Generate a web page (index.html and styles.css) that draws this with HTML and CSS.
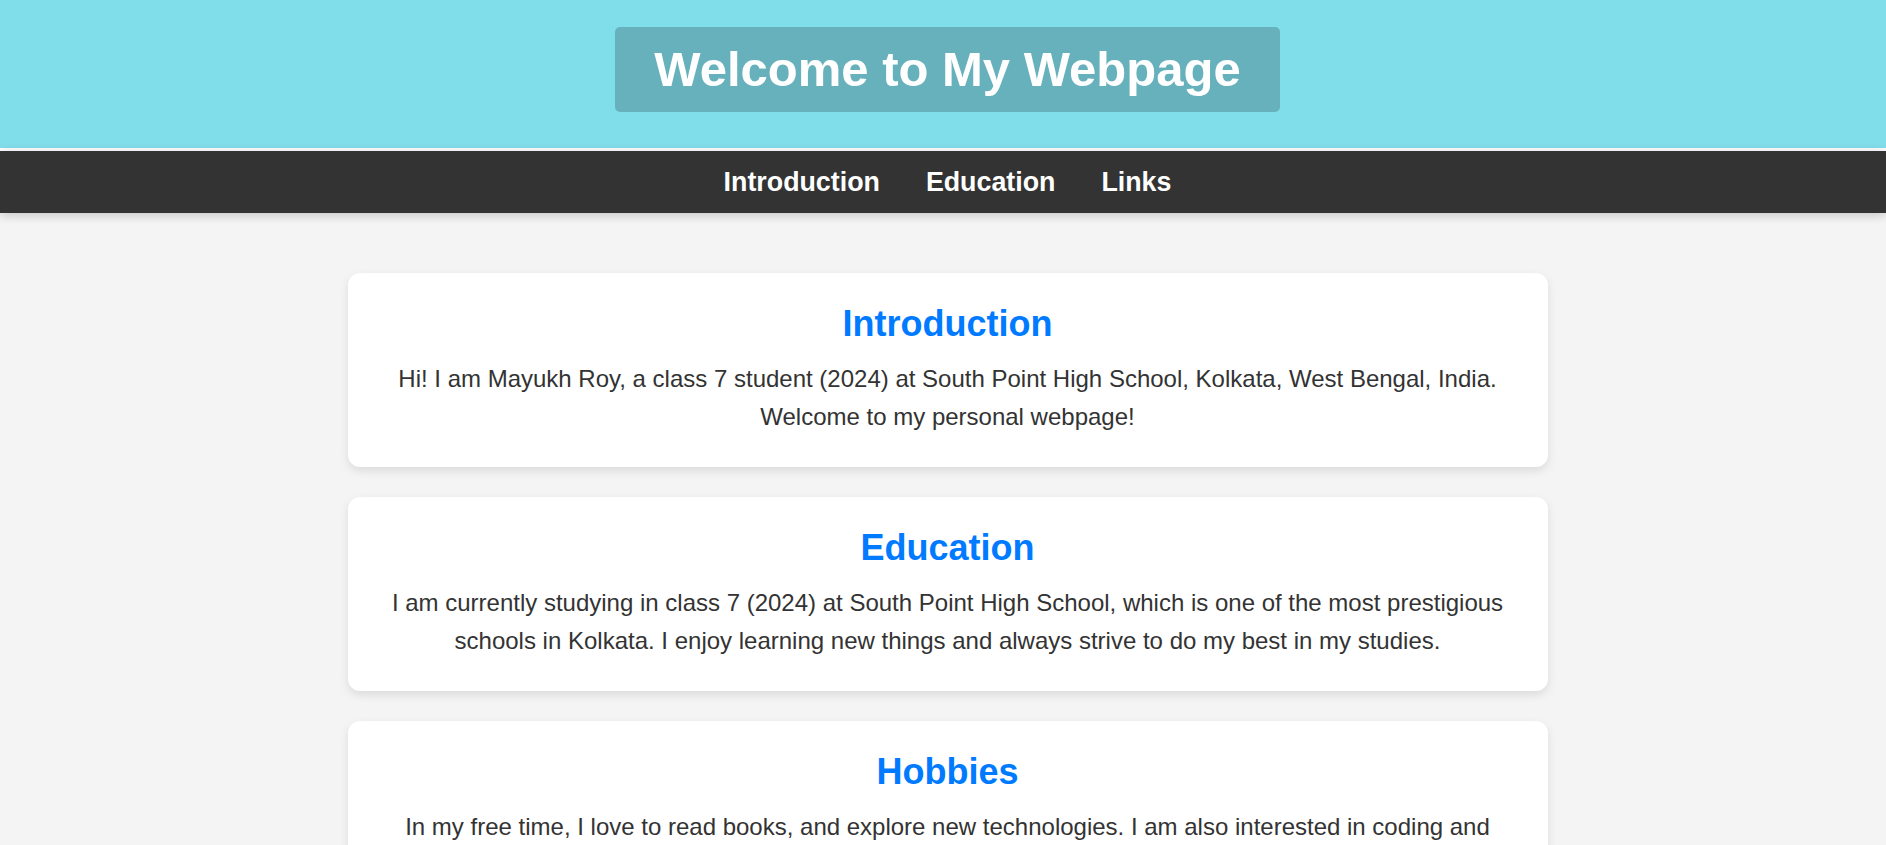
FILE: index.html
```html
<!DOCTYPE html>
<html lang="en">
<head>
<meta charset="utf-8">
<title>Welcome to My Webpage</title>
<link rel="stylesheet" href="styles.css">
</head>
<body>
<header class="site-header">
  <h1 class="site-title">Welcome to My Webpage</h1>
</header>
<nav class="site-nav">
  <a href="#introduction">Introduction</a>
  <a href="#education">Education</a>
  <a href="#links">Links</a>
</nav>
<main class="content">
  <section class="card" id="introduction">
    <h2>Introduction</h2>
    <p>Hi! I am Mayukh Roy, a class 7 student (2024) at South Point High School, Kolkata, West Bengal, India. Welcome to my personal webpage!</p>
  </section>
  <section class="card" id="education">
    <h2>Education</h2>
    <p>I am currently studying in class 7 (2024) at South Point High School, which is one of the most prestigious schools in Kolkata. I enjoy learning new things and always strive to do my best in my studies.</p>
  </section>
  <section class="card" id="hobbies">
    <h2>Hobbies</h2>
    <p>In my free time, I love to read books, and explore new technologies. I am also interested in coding and building my own websites.</p>
  </section>
  <section class="card" id="links">
    <h2>Links</h2>
    <p>Here are some of my favourite links.</p>
  </section>
</main>
</body>
</html>
```

FILE: styles.css
```css
* {
  box-sizing: border-box;
}

body {
  margin: 0;
  background: #f4f4f4;
  font-family: "Liberation Sans", Arial, sans-serif;
  color: #333;
}

.site-header {
  background: #80deea;
  display: flex;
  justify-content: center;
  padding: 27px 0 36px 9px;
  border-bottom: 3px solid #fff;
}

.site-title {
  margin: 0;
  font-size: 49px;
  line-height: 57px;
  font-weight: bold;
  color: #fff;
  background: rgba(0, 0, 0, 0.2);
  padding: 14px 39px;
  border-radius: 5px;
}

.site-nav {
  background: #333;
  display: flex;
  justify-content: center;
  gap: 46px;
  padding: 15px 0 15px 9px;
  box-shadow: 0 2px 10px rgba(0, 0, 0, 0.2);
  position: relative;
}

.site-nav a {
  color: #fff;
  text-decoration: none;
  font-weight: bold;
  font-size: 26.8px;
  line-height: 32px;
}

.content {
  display: flex;
  flex-direction: column;
  align-items: center;
  gap: 30px;
  padding: 60px 0 40px 9px;
}

.card {
  width: 1200px;
  background: #fff;
  border-radius: 12px;
  box-shadow: 0 4px 10px rgba(0, 0, 0, 0.1);
  padding: 30px 40px 30px;
  text-align: center;
}

.card h2 {
  margin: 0 0 16px;
  font-size: 36px;
  font-weight: bold;
  color: #007bff;
  line-height: 41px;
}

.card p {
  margin: 0;
  font-size: 24px;
  line-height: 1.6;
}
```
